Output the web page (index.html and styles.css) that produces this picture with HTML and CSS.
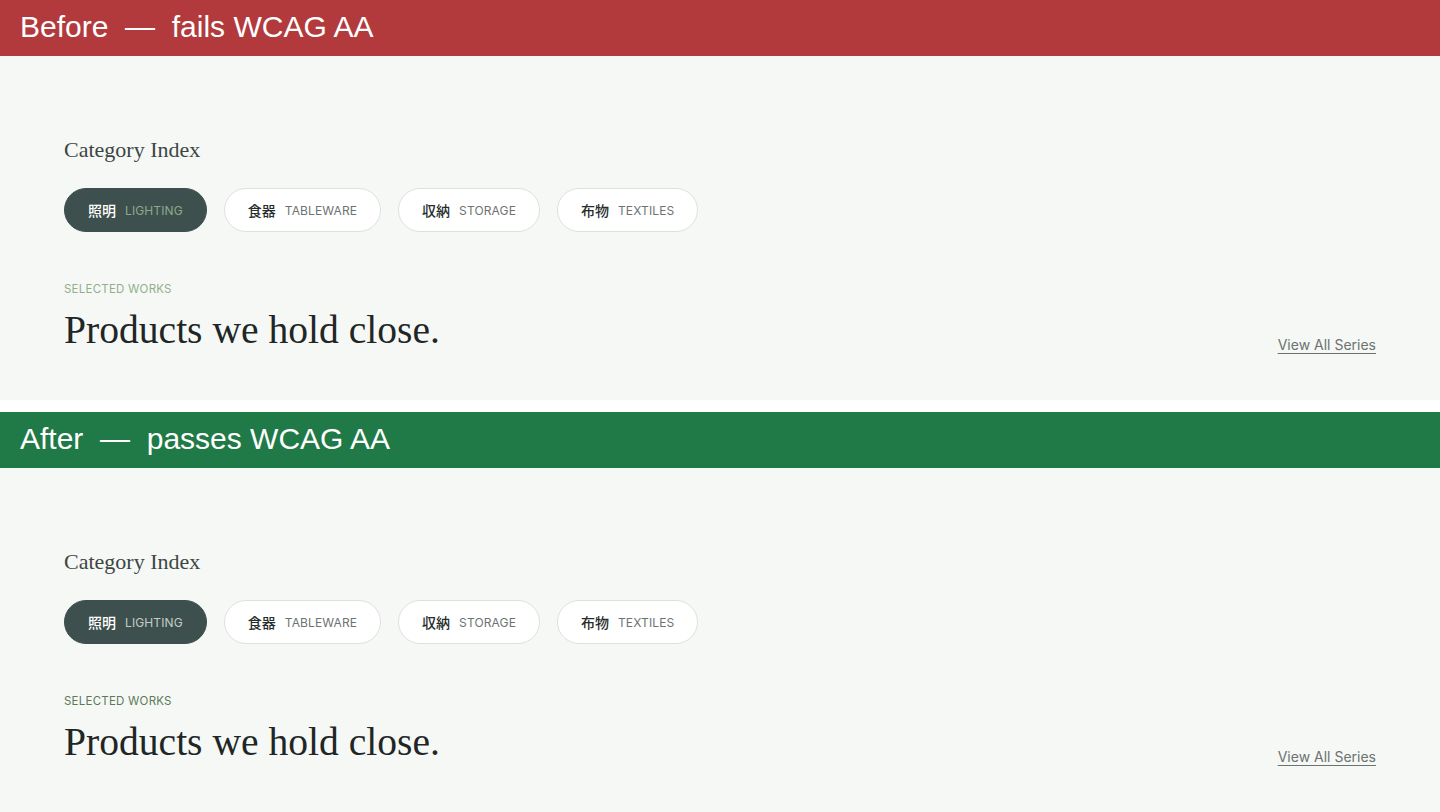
FILE: index.html
```html
<!DOCTYPE html>
<html lang="ja">
<head>
    <meta charset="UTF-8">
    <meta name="viewport" content="width=device-width, initial-scale=1.0">
    <title>Category Index — contrast before / after</title>
    <link rel="stylesheet" href="styles.css">
</head>
<body>
    <!-- Antes: contraste insuficiente -->
    <div class="panel panel-before">
        <div class="banner">Before  —  fails WCAG AA</div>
        <section class="seccion">
            <h2 class="titulo-indice">Category Index</h2>
            <div class="chips">
                <a class="chip activo" href="#"><span class="jp">照明</span><span class="en">LIGHTING</span></a>
                <a class="chip" href="#"><span class="jp">食器</span><span class="en">TABLEWARE</span></a>
                <a class="chip" href="#"><span class="jp">収納</span><span class="en">STORAGE</span></a>
                <a class="chip" href="#"><span class="jp">布物</span><span class="en">TEXTILES</span></a>
            </div>
            <div class="cabecera">
                <div>
                    <p class="etiqueta">SELECTED WORKS</p>
                    <h1 class="titular">Products we hold close.</h1>
                </div>
                <a class="ver-todo" href="#">View All Series</a>
            </div>
        </section>
    </div>

    <!-- Después: pasa AA -->
    <div class="panel panel-after">
        <div class="banner">After  —  passes WCAG AA</div>
        <section class="seccion">
            <h2 class="titulo-indice">Category Index</h2>
            <div class="chips">
                <a class="chip activo" href="#"><span class="jp">照明</span><span class="en">LIGHTING</span></a>
                <a class="chip" href="#"><span class="jp">食器</span><span class="en">TABLEWARE</span></a>
                <a class="chip" href="#"><span class="jp">収納</span><span class="en">STORAGE</span></a>
                <a class="chip" href="#"><span class="jp">布物</span><span class="en">TEXTILES</span></a>
            </div>
            <div class="cabecera">
                <div>
                    <p class="etiqueta">SELECTED WORKS</p>
                    <h1 class="titular">Products we hold close.</h1>
                </div>
                <a class="ver-todo" href="#">View All Series</a>
            </div>
        </section>
    </div>
</body>
</html>
```

FILE: styles.css
```css
body {
    margin: 0;
    padding: 0;
    background: #fff;
    font-family: Inter, "Noto Sans CJK JP", sans-serif;
}
.panel {
    margin-bottom: 12px;
}
.banner {
    height: 56px;
    box-sizing: border-box;
    display: flex;
    align-items: center;
    padding: 0 20px 3px;
    color: #fff;
    font-family: "Liberation Sans", Arial, sans-serif;
    font-size: 30px;
    white-space: pre;
}
.panel-before .banner {
    background: #b23a3d;
}
.panel-after .banner {
    background: #1f7a47;
}
.seccion {
    background: #f6f8f6;
    padding: 80px 64px 0;
    height: 264px;
}
.titulo-indice {
    margin: 0;
    font-family: "Liberation Serif", "Times New Roman", serif;
    font-weight: 400;
    font-size: 22px;
    line-height: 28px;
    color: #3c4644;
}
.chips {
    display: flex;
    gap: 17px;
    margin-top: 24px;
}
.chip {
    display: flex;
    align-items: center;
    gap: 9px;
    height: 44px;
    box-sizing: border-box;
    padding: 0 23px;
    border: 1px solid #dde2dd;
    border-radius: 22px;
    background: #fff;
    text-decoration: none;
}
.chip .jp {
    font-family: "Noto Sans CJK JP", sans-serif;
    font-weight: 500;
    font-size: 14px;
    color: #262c2b;
}
.chip .en {
    font-size: 12px;
    letter-spacing: 0.01em;
    color: #6c7371;
}
.chip.activo {
    background: #3e504d;
    border-color: #3e504d;
}
.chip.activo .jp {
    color: #fff;
}
.panel-before .chip.activo .en {
    color: #8fa88d;
}
.panel-after .chip.activo .en {
    color: #c3cdc9;
}
.cabecera {
    display: flex;
    justify-content: space-between;
    align-items: flex-end;
    margin-top: 50px;
}
.etiqueta {
    margin: 0;
    font-size: 11.5px;
    line-height: 14px;
    letter-spacing: 0.02em;
}
.panel-before .etiqueta {
    color: #8fb08c;
}
.panel-after .etiqueta {
    color: #5b7a56;
}
.titular {
    margin: 11px 0 0;
    font-family: "Liberation Serif", "Times New Roman", serif;
    font-weight: 400;
    font-size: 39.6px;
    line-height: 46px;
    color: #1f2726;
}
.ver-todo {
    font-size: 14px;
    color: #6b7270;
    text-decoration: underline;
    text-underline-offset: 3px;
    margin-bottom: 0;
}
```
